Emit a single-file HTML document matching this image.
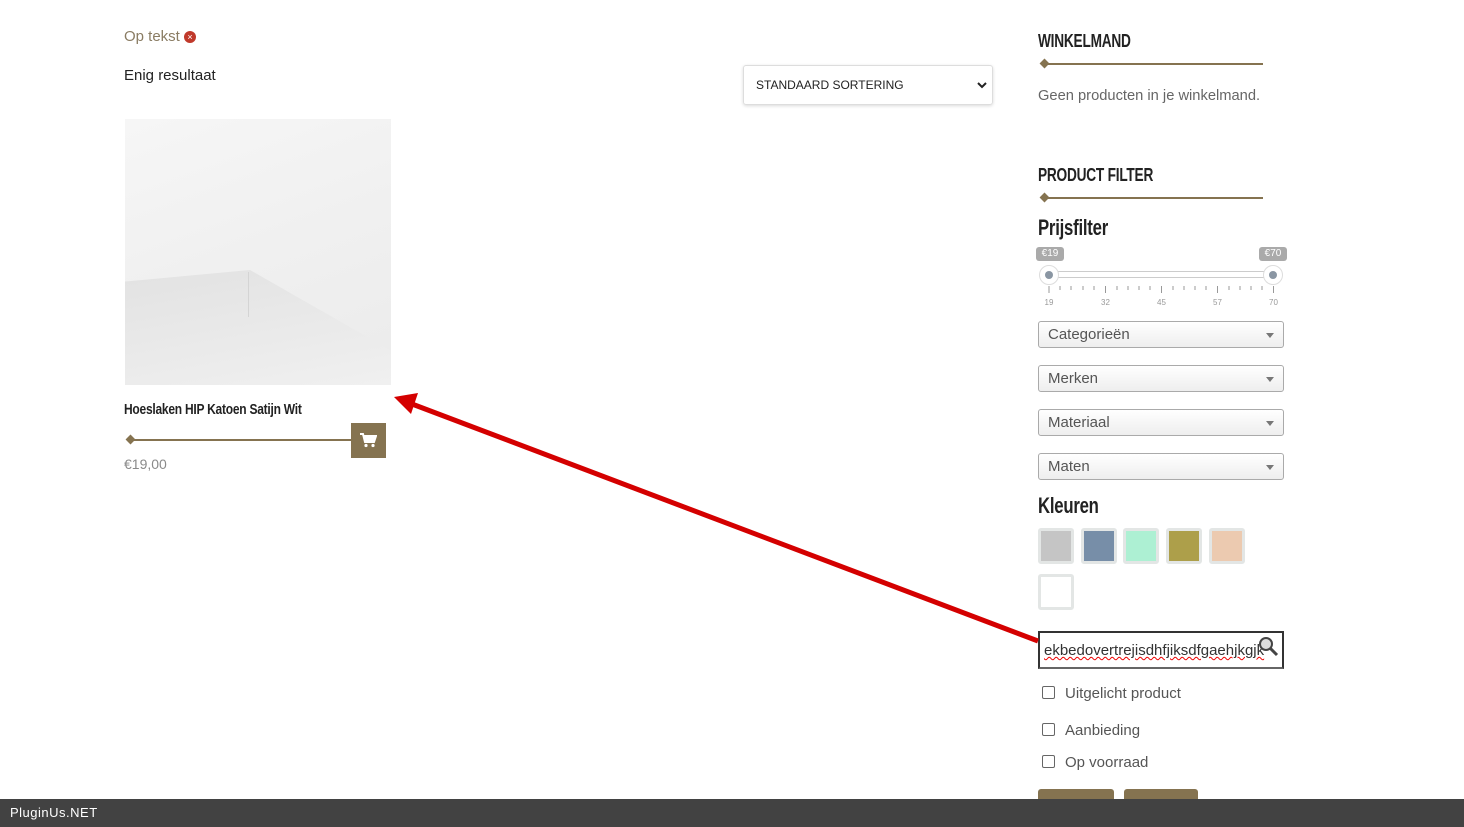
<!DOCTYPE html>
<html><head><meta charset="utf-8"><style>
*{box-sizing:border-box;margin:0;padding:0}
body{width:1464px;height:827px;position:relative;overflow:hidden;background:#fff;font-family:"Liberation Sans",sans-serif;color:#333}
.a{position:absolute}
.h{font-family:"Liberation Sans",sans-serif;font-weight:bold;color:#222;letter-spacing:-0.3px;transform:scaleX(0.76);transform-origin:left top;white-space:nowrap}
.sel{position:absolute;left:1038px;width:246px;height:27px;border:1px solid #aaa;border-radius:3px;background:linear-gradient(#fff,#eee);font-size:15px;color:#555;padding:4px 9px}
.sel:after{content:"";position:absolute;right:9px;top:11px;border:4px solid transparent;border-top:5px solid #777}
.sw{position:absolute;width:36px;height:36px;border:3px solid #e3e6e5;border-radius:3px}
.cb{position:absolute;left:1042px;width:13px;height:13px;border:1px solid #666;border-radius:2px}
.cl{position:absolute;left:1065px;font-size:15px;color:#555}
</style></head><body>
<div class="a" style="left:124px;top:28px;font-size:15px;color:#8a7c63">Op tekst</div>
<div class="a" style="left:184px;top:31px;width:12px;height:12px;border-radius:50%;background:#c0392b;color:#fff;font-size:9px;line-height:12px;text-align:center">×</div>
<div class="a" style="left:124px;top:67px;font-size:15px;color:#222">Enig resultaat</div>
<div class="a" style="left:743px;top:65px;width:250px;height:40px;border:1px solid #ddd;border-radius:3px;box-shadow:0 1px 3px rgba(0,0,0,.15);font-size:12px;color:#222;padding:12px 12px">STANDAARD SORTERING<svg style="position:absolute;right:5px;top:15px" width="10" height="8"><path d="M1 2 L5 6 L9 2" stroke="#222" stroke-width="2" fill="none"/></svg></div>
<div class="a" style="left:125px;top:119px;width:266px;height:266px;background:linear-gradient(160deg,#f6f6f6 0%,#f0f0f0 50%,#ebebeb 100%)"></div>
<div class="a" style="left:125px;top:270px;width:266px;height:115px;background:linear-gradient(170deg,#e2e2e2,#f0f0f0);clip-path:polygon(0 10%,47% 0,100% 70%,100% 100%,0 100%)"></div>
<div class="a" style="left:248px;top:272px;width:1px;height:45px;background:#d4d4d4"></div>
<div class="a h" style="left:124px;top:401px;font-size:15px;transform:scaleX(0.8)">Hoeslaken HIP Katoen Satijn Wit</div>
<div class="a" style="left:131px;top:439px;width:220px;height:2px;background:#857350"></div>
<div class="a" style="left:127px;top:436px;width:7px;height:7px;background:#857350;transform:rotate(45deg)"></div>
<div class="a" style="left:351px;top:423px;width:35px;height:35px;background:#857350"><svg style="position:absolute;left:9px;top:10px" width="17" height="15"><path d="M0 1 H3 L5 9 H14 L16 3 H4" stroke="#fff" stroke-width="2" fill="#fff"/><circle cx="6" cy="12.5" r="1.6" fill="#fff"/><circle cx="13" cy="12.5" r="1.6" fill="#fff"/></svg></div>
<div class="a" style="left:124px;top:456px;font-size:14px;color:#8a8a8a">€19,00</div>

<div class="a h" style="left:1038px;top:31px;font-size:18px">WINKELMAND</div>
<div class="a" style="left:1044px;top:63px;width:219px;height:2px;background:#857350"></div>
<div class="a" style="left:1041px;top:60px;width:7px;height:7px;background:#857350;transform:rotate(45deg)"></div>
<div class="a" style="left:1038px;top:88px;font-size:14.7px;color:#666">Geen producten in je winkelmand.</div>
<div class="a h" style="left:1038px;top:165px;font-size:18px">PRODUCT FILTER</div>
<div class="a" style="left:1044px;top:197px;width:219px;height:2px;background:#857350"></div>
<div class="a" style="left:1041px;top:194px;width:7px;height:7px;background:#857350;transform:rotate(45deg)"></div>
<div class="a h" style="left:1038px;top:215px;font-size:22px">Prijsfilter</div>
<div class="a" style="left:1036px;top:247px;width:28px;height:14px;background:#aaa;border-radius:3px;color:#fff;font-size:10px;text-align:center;line-height:14px">€19</div>
<div class="a" style="left:1259px;top:247px;width:28px;height:14px;background:#aaa;border-radius:3px;color:#fff;font-size:10px;text-align:center;line-height:14px">€70</div>
<div class="a" style="left:1048px;top:271px;width:225px;height:7px;border:1px solid #ccc;border-radius:3px"></div>
<div class="a" style="left:1039px;top:265px;width:20px;height:20px;border-radius:50%;border:1px solid #ddd;background:#fff"><div style="margin:5px;width:8px;height:8px;border-radius:50%;background:#8a96a3"></div></div>
<div class="a" style="left:1263px;top:265px;width:20px;height:20px;border-radius:50%;border:1px solid #ddd;background:#fff"><div style="margin:5px;width:8px;height:8px;border-radius:50%;background:#8a96a3"></div></div>
<svg class="a" style="left:1040px;top:285px" width="250" height="25">
<g stroke="#999" stroke-width="1">
<line x1="9" y1="1" x2="9" y2="8"/><line x1="20" y1="1" x2="20" y2="5"/><line x1="31" y1="1" x2="31" y2="5"/><line x1="43" y1="1" x2="43" y2="5"/><line x1="54" y1="1" x2="54" y2="5"/><line x1="65.5" y1="1" x2="65.5" y2="8"/><line x1="77" y1="1" x2="77" y2="5"/><line x1="88" y1="1" x2="88" y2="5"/><line x1="99" y1="1" x2="99" y2="5"/><line x1="110" y1="1" x2="110" y2="5"/><line x1="121.5" y1="1" x2="121.5" y2="8"/><line x1="133" y1="1" x2="133" y2="5"/><line x1="144" y1="1" x2="144" y2="5"/><line x1="155" y1="1" x2="155" y2="5"/><line x1="166" y1="1" x2="166" y2="5"/><line x1="177.5" y1="1" x2="177.5" y2="8"/><line x1="189" y1="1" x2="189" y2="5"/><line x1="200" y1="1" x2="200" y2="5"/><line x1="211" y1="1" x2="211" y2="5"/><line x1="222" y1="1" x2="222" y2="5"/><line x1="233.5" y1="1" x2="233.5" y2="8"/></g>
<g fill="#999" font-size="8" font-family="Liberation Sans" text-anchor="middle"><text x="9" y="20">19</text><text x="65.5" y="20">32</text><text x="121.5" y="20">45</text><text x="177.5" y="20">57</text><text x="233.5" y="20">70</text></g></svg>
<div class="sel" style="top:321px">Categorieën</div>
<div class="sel" style="top:365px">Merken</div>
<div class="sel" style="top:409px">Materiaal</div>
<div class="sel" style="top:453px">Maten</div>
<div class="a h" style="left:1038px;top:493px;font-size:22px">Kleuren</div>
<div class="sw" style="left:1038px;top:528px;background:#c5c5c5"></div>
<div class="sw" style="left:1081px;top:528px;background:#778ea8"></div>
<div class="sw" style="left:1123px;top:528px;background:#adf0d3"></div>
<div class="sw" style="left:1166px;top:528px;background:#ad9f4a"></div>
<div class="sw" style="left:1209px;top:528px;background:#eccab0"></div>
<div class="sw" style="left:1038px;top:574px;background:#fff"></div>
<div class="a" style="left:1038px;top:631px;width:246px;height:38px;border:2px solid #333;border-bottom-color:#666;overflow:hidden;font-size:15px;color:#333;padding:9px 0 0 4px;white-space:nowrap"><span style="text-decoration:underline wavy #e00;text-decoration-thickness:1px">ekbedovertrejisdhfjiksdfgaehjkgjk</span></div>
<svg class="a" style="left:1258px;top:636px" width="22" height="22"><circle cx="8" cy="8" r="6" fill="#ddd" stroke="#444" stroke-width="2"/><line x1="12" y1="12" x2="19" y2="19" stroke="#444" stroke-width="3"/></svg>
<div class="cb" style="top:686px"></div><div class="cl" style="top:685px">Uitgelicht product</div>
<div class="cb" style="top:723px"></div><div class="cl" style="top:722px">Aanbieding</div>
<div class="cb" style="top:755px"></div><div class="cl" style="top:754px">Op voorraad</div>
<div class="a" style="left:1038px;top:789px;width:76px;height:20px;background:#857350;border-radius:3px"></div>
<div class="a" style="left:1124px;top:789px;width:74px;height:20px;background:#857350;border-radius:3px"></div>
<svg class="a" style="left:0;top:0" width="1464" height="827"><line x1="1038" y1="641" x2="412" y2="404" stroke="#d40000" stroke-width="5"/><polygon points="394,397 418,393 411,414" fill="#d40000"/></svg>
<div class="a" style="left:0;top:799px;width:1464px;height:28px;background:#424242;color:#fff;font-size:13px;padding:6px 10px;letter-spacing:.5px">PluginUs.NET</div>
</body></html>
